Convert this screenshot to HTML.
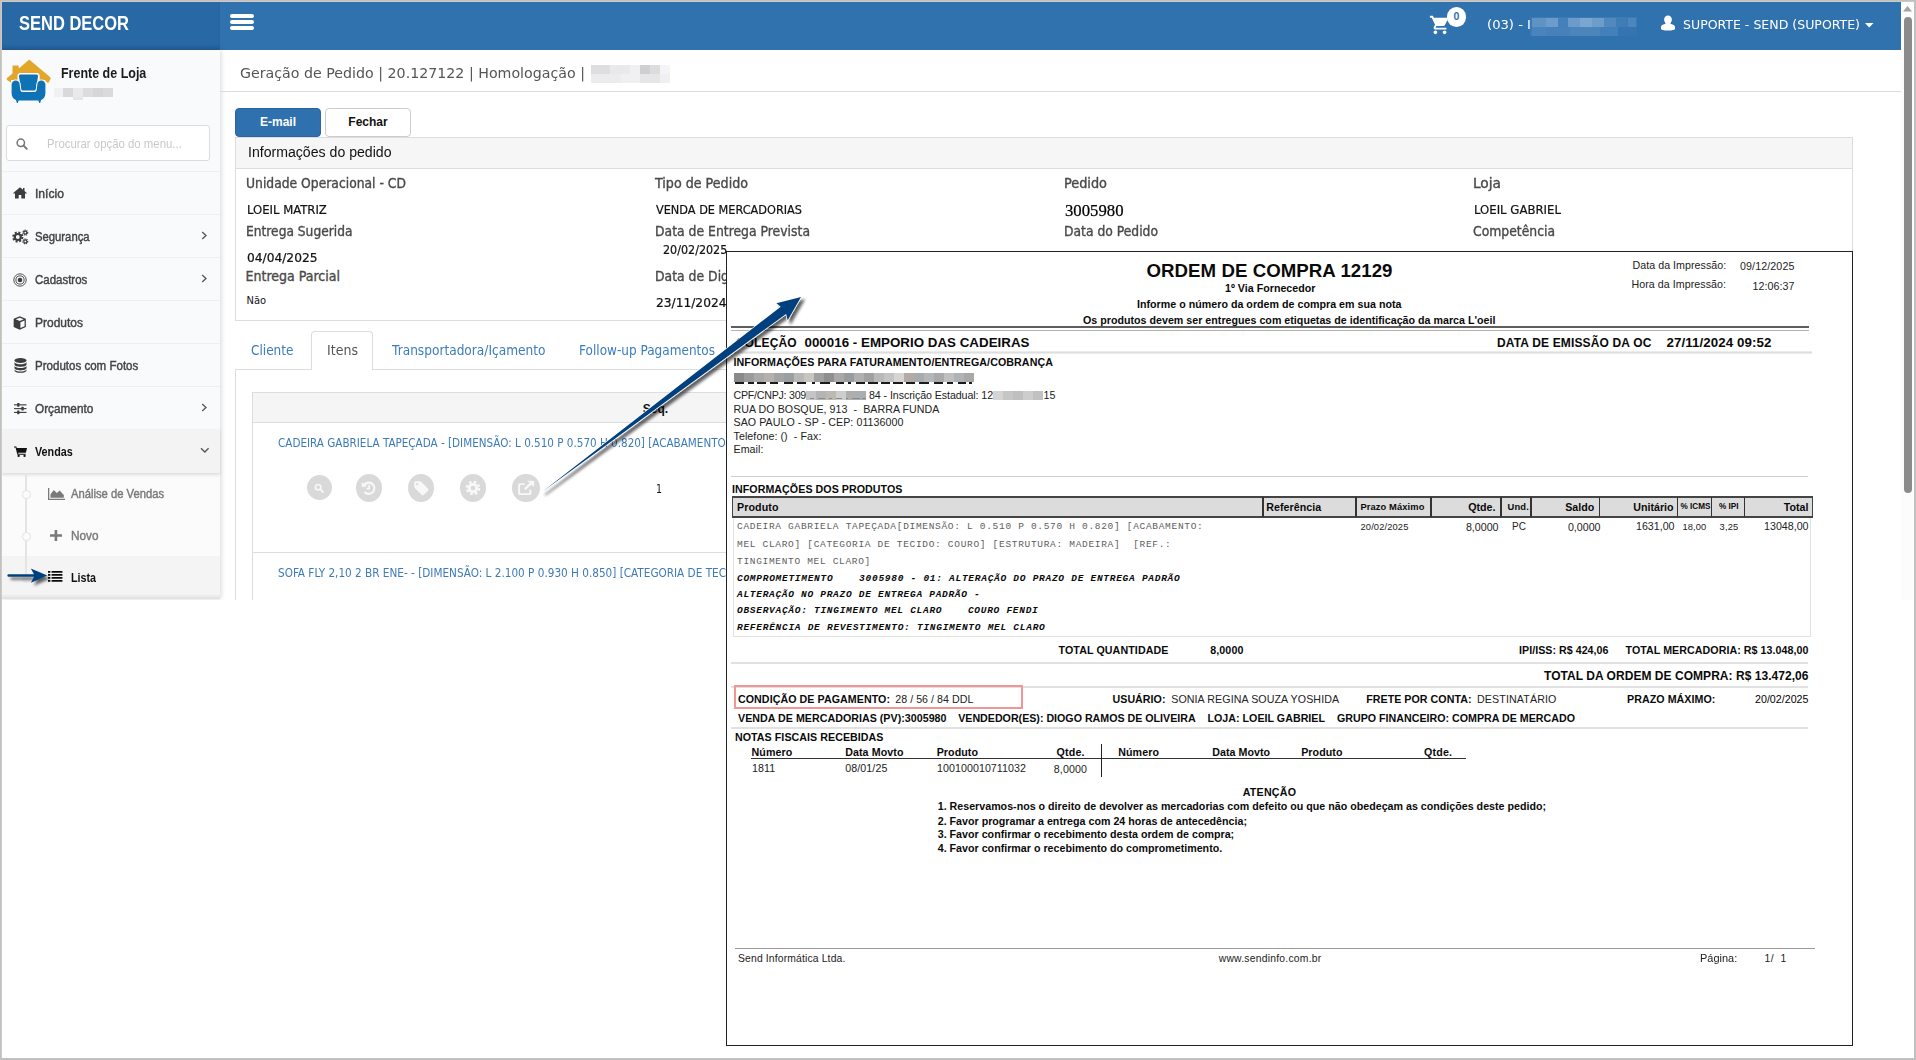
<!DOCTYPE html>
<html lang="pt-BR"><head><meta charset="utf-8"><title>Geração de Pedido</title>
<style>
html,body{margin:0;padding:0;}
body{width:1916px;height:1060px;background:#fff;position:relative;overflow:hidden;font-family:"Liberation Sans",Arial,sans-serif;}
.b{position:absolute;box-sizing:border-box;}
.t{position:absolute;white-space:pre;line-height:1;}
svg{position:absolute;overflow:visible;}
</style></head>
<body>
<div class="b" style="left:0px;top:0px;width:1916px;height:1060px;background:#fff;"></div>
<div class="b" style="left:2px;top:2px;width:218px;height:48px;background:#2868a5;box-shadow:inset 0 -4px 4px -2px rgba(0,0,0,.13);"></div>
<div class="b" style="left:220px;top:2px;width:1681px;height:48px;background:#3072ae;"></div>
<div class="t" style="top:14.00px;font:700 19.5px/1 'Liberation Sans', Arial, sans-serif;color:#fff;left:18.50px;transform-origin:0 0;transform:scaleX(0.8460);">SEND DECOR</div>
<div class="b" style="left:230px;top:14px;width:24px;height:4px;background:#fff;border-radius:2px;"></div>
<div class="b" style="left:230px;top:20px;width:24px;height:4px;background:#fff;border-radius:2px;"></div>
<div class="b" style="left:230px;top:26px;width:24px;height:4px;background:#fff;border-radius:2px;"></div>
<svg style="left:1429px;top:14px" width="22" height="22" viewBox="0 0 24 24"><path fill="#fff" d="M7 18c-1.1 0-2 .9-2 2s.9 2 2 2 2-.9 2-2-.9-2-2-2zM1 2v2h2l3.6 7.6-1.35 2.45C5.09 14.32 5 14.65 5 15c0 1.1.9 2 2 2h12v-2H7.42a.25.25 0 0 1-.25-.25l.03-.12L8.1 13h7.45c.75 0 1.41-.41 1.75-1.03l3.58-6.49A1 1 0 0 0 20 4H5.21l-.94-2H1zm16 16c-1.1 0-2 .9-2 2s.9 2 2 2 2-.9 2-2-.9-2-2-2z"/></svg>
<div class="b" style="left:1446.7px;top:7.2px;width:19.5px;height:19.5px;background:#fff;border-radius:50%;"></div>
<div class="t" style="top:11.00px;font:700 10.5px/1 'Liberation Sans', Arial, sans-serif;color:#2f6fab;left:856.50px;width:1200px;text-align:center;transform-origin:50% 0;"><span>0</span></div>
<div class="t" style="top:18.00px;font:400 13px/1 'DejaVu Sans Condensed', 'DejaVu Sans', sans-serif;color:#fff;left:1486.50px;transform-origin:0 0;transform:scaleX(1.1250);">(03) - I</div>
<div class="b" style="left:1530px;top:17px;width:107px;height:19px;background:#3b7ab5;"></div>
<div class="b" style="left:1532px;top:18px;width:14px;height:9px;background:#5f93c4;"></div>
<div class="b" style="left:1546px;top:18px;width:12px;height:9px;background:#6b9ccb;"></div>
<div class="b" style="left:1558px;top:18px;width:10px;height:9px;background:#4580ba;"></div>
<div class="b" style="left:1568px;top:18px;width:12px;height:9px;background:#6a9bca;"></div>
<div class="b" style="left:1580px;top:18px;width:12px;height:9px;background:#7aa6d0;"></div>
<div class="b" style="left:1592px;top:18px;width:12px;height:9px;background:#6c9dcb;"></div>
<div class="b" style="left:1604px;top:18px;width:12px;height:9px;background:#5189bf;"></div>
<div class="b" style="left:1616px;top:18px;width:10px;height:9px;background:#3f7db7;"></div>
<div class="b" style="left:1628px;top:18px;width:8px;height:9px;background:#4d86bd;"></div>
<div class="b" style="left:1532px;top:27px;width:14px;height:9px;background:#4a84bc;"></div>
<div class="b" style="left:1546px;top:27px;width:24px;height:9px;background:#4781ba;"></div>
<div class="b" style="left:1570px;top:27px;width:30px;height:9px;background:#4c85bc;"></div>
<div class="b" style="left:1600px;top:27px;width:18px;height:9px;background:#437fb8;"></div>
<div class="b" style="left:1618px;top:27px;width:19px;height:9px;background:#3475b1;"></div>
<svg style="left:1660px;top:15px" width="16" height="16" viewBox="0 0 16 16"><path fill="#fff" d="M8 .5c2.3 0 3.9 1.7 3.9 4.1 0 1.5-.6 2.9-1.600 3.700.3.5 1.100.9 2.300 1.300C14.500 10.300 15 11.200 15 12.400V14c0 .8-3 1.500-7 1.500S1 14.800 1 14v-1.600c0-1.200.5-2.100 2.400-2.800 1.200-.4 2-.8 2.300-1.300C4.700 7.500 4.100 6.100 4.100 4.600 4.100 2.200 5.700.5 8 .5z"/></svg>
<div class="t" style="top:18.00px;font:400 13px/1 'DejaVu Sans Condensed', 'DejaVu Sans', sans-serif;color:#fff;left:1682.50px;transform-origin:0 0;transform:scaleX(1.0728);">SUPORTE - SEND (SUPORTE)</div>
<svg style="left:1865px;top:22.5px" width="9" height="5" viewBox="0 0 9 5"><path fill="#fff" d="M0 0h8.500L4.250 4.500z"/></svg>
<div class="b" style="left:1901px;top:2px;width:12px;height:598px;background:#fcfcfc;"></div>
<svg style="left:1903px;top:6px" width="9" height="6" viewBox="0 0 9 6"><path fill="#a3a3a3" d="M4.500 0L9 5.500H0z"/></svg>
<div class="b" style="left:1904px;top:17px;width:8px;height:476px;background:#8b8b8b;border-radius:4px;"></div>
<div class="b" style="left:2px;top:50px;width:218px;height:549px;background:#f9fafc;box-shadow:1px 0 5px rgba(0,0,0,.16);"></div>
<svg style="left:6px;top:59px" width="46" height="46" viewBox="6 59 46 46">
<path fill="#e2a72a" d="M28.400 60.300c.5-.4 1.100-.4 1.600 0L50 77c.7.600.8 1.600.4 2.300l-1.600 2.900c-.3.600-1 .7-1.500.3L28.700 68.500 12 82.600c-.5.400-1.200.3-1.500-.3L7 80c-.5-.8-.3-1.700.4-2.300l5.100-4.300v-6.700c0-.7.5-1.200 1.200-1.200h3.900c.7 0 1.200.5 1.200 1.200v1.700z"/>
<path fill="#e2a72a" d="M28.700 66L47 81.500H10.500z"/>
<path fill="#f9fafc" d="M17.500 76c0-1.700 1.300-3 3-3h16.200c1.700 0 3 1.300 3 3v4h5.800v26H11V80h6.500z"/>
<path fill="#0f72b5" stroke="#f9fafc" stroke-width="2.200" paint-order="stroke" d="M20.500 74.600h16c1 0 1.700.8 1.500 1.800l-2 12.600c-.1.900-.9 1.500-1.700 1.500H22.700c-.9 0-1.600-.6-1.700-1.500l-2-12.600c-.2-1 .5-1.800 1.500-1.800z"/>
<path fill="#0f72b5" stroke="#f9fafc" stroke-width="2" paint-order="stroke" d="M15.700 80.400c2.200 0 3.700 1.400 3.900 3.600l.7 5.800c.2 1.500 1.200 2.300 2.600 2.300h11.200c1.400 0 2.400-.8 2.600-2.300l.7-5.800c.2-2.200 1.700-3.600 3.900-3.600 2.300 0 4.100 1.800 4.100 4.100v8.700c0 3.300-1.700 5.800-4.300 6.800l-.9 2.700c-.2.500-.9.500-1.100 0l-.7-2.100H18.600l-.7 2.100c-.2.500-.9.500-1.100 0l-.9-2.700c-2.600-1-4.300-3.500-4.300-6.800v-8.700c0-2.300 1.800-4.100 4.100-4.100z"/>
</svg>
<div class="t" style="top:66.00px;font:700 14.5px/1 'Liberation Sans', Arial, sans-serif;color:#1c1c1c;left:60.90px;transform-origin:0 0;transform:scaleX(0.8607);">Frente de Loja</div>
<div class="b" style="left:54px;top:88px;width:9px;height:9px;background:#f1f1f3;"></div>
<div class="b" style="left:63px;top:88px;width:10px;height:9px;background:#d9d9db;"></div>
<div class="b" style="left:73px;top:88px;width:10px;height:9px;background:#e9e9eb;"></div>
<div class="b" style="left:83px;top:88px;width:10px;height:9px;background:#dcdcde;"></div>
<div class="b" style="left:93px;top:88px;width:10px;height:9px;background:#d6d6d8;"></div>
<div class="b" style="left:103px;top:88px;width:10px;height:9px;background:#dadadc;"></div>
<div class="b" style="left:73px;top:97px;width:10px;height:2.5px;background:#e6e6e8;"></div>
<div class="b" style="left:6px;top:125px;width:204px;height:36px;background:#fff;border:1px solid #dcdcdc;border-radius:3px;"></div>
<svg style="left:15.5px;top:138px" width="12" height="12" viewBox="0 0 12 12"><circle cx="4.800" cy="4.800" r="3.700" fill="none" stroke="#767676" stroke-width="1.500"/><path d="M7.600 7.600L10.800 10.800" stroke="#767676" stroke-width="1.900" stroke-linecap="round"/></svg>
<div class="t" style="top:137.00px;font:400 13.5px/1 'Liberation Sans', Arial, sans-serif;color:#c9c9c9;left:46.70px;transform-origin:0 0;transform:scaleX(0.8433);">Procurar opção do menu...</div>
<div class="b" style="left:2px;top:171px;width:218px;height:1px;background:#efeff1;"></div>
<div class="b" style="left:2px;top:214px;width:218px;height:1px;background:#efeff1;"></div>
<div class="b" style="left:2px;top:257px;width:218px;height:1px;background:#efeff1;"></div>
<div class="b" style="left:2px;top:300px;width:218px;height:1px;background:#efeff1;"></div>
<div class="b" style="left:2px;top:343px;width:218px;height:1px;background:#efeff1;"></div>
<div class="b" style="left:2px;top:386px;width:218px;height:1px;background:#efeff1;"></div>
<div class="b" style="left:2px;top:472.5px;width:218px;height:84px;background:#fbfbfb;"></div>
<div class="b" style="left:2px;top:556px;width:218px;height:41px;background:#f4f4f4;"></div>
<div class="b" style="left:2px;top:429px;width:218px;height:43.5px;background:#f3f3f3;box-shadow:0 2px 3px rgba(0,0,0,.12);"></div>
<div class="t" style="top:187.00px;font:400 13.2px/1 'Liberation Sans', Arial, sans-serif;color:#444;left:34.70px;transform-origin:0 0;transform:scaleX(0.9197);-webkit-text-stroke:.45px #444;">Início</div>
<div class="t" style="top:230.00px;font:400 13.2px/1 'Liberation Sans', Arial, sans-serif;color:#444;left:34.70px;transform-origin:0 0;transform:scaleX(0.8558);-webkit-text-stroke:.45px #444;">Segurança</div>
<svg style="left:200.500px;top:231.0px" width="7" height="9" viewBox="0 0 7 9"><path d="M1.200 1l3.800 3.500L1.200 8" fill="none" stroke="#555" stroke-width="1.300"/></svg>
<div class="t" style="top:273.00px;font:400 13.2px/1 'Liberation Sans', Arial, sans-serif;color:#444;left:34.70px;transform-origin:0 0;transform:scaleX(0.8701);-webkit-text-stroke:.45px #444;">Cadastros</div>
<svg style="left:200.500px;top:274.0px" width="7" height="9" viewBox="0 0 7 9"><path d="M1.200 1l3.800 3.500L1.200 8" fill="none" stroke="#555" stroke-width="1.300"/></svg>
<div class="t" style="top:316.00px;font:400 13.2px/1 'Liberation Sans', Arial, sans-serif;color:#444;left:34.70px;transform-origin:0 0;transform:scaleX(0.9091);-webkit-text-stroke:.45px #444;">Produtos</div>
<div class="t" style="top:359.00px;font:400 13.2px/1 'Liberation Sans', Arial, sans-serif;color:#444;left:34.70px;transform-origin:0 0;transform:scaleX(0.8753);-webkit-text-stroke:.45px #444;">Produtos com Fotos</div>
<div class="t" style="top:402.00px;font:400 13.2px/1 'Liberation Sans', Arial, sans-serif;color:#444;left:34.70px;transform-origin:0 0;transform:scaleX(0.8937);-webkit-text-stroke:.45px #444;">Orçamento</div>
<svg style="left:200.500px;top:403.0px" width="7" height="9" viewBox="0 0 7 9"><path d="M1.200 1l3.800 3.500L1.200 8" fill="none" stroke="#555" stroke-width="1.300"/></svg>
<div class="t" style="top:445.00px;font:700 13.2px/1 'Liberation Sans', Arial, sans-serif;color:#111;left:34.70px;transform-origin:0 0;transform:scaleX(0.8184);">Vendas</div>
<svg style="left:199.500px;top:447.0px" width="10" height="7" viewBox="0 0 10 7"><path d="M1 1.200l3.800 3.800L8.600 1.200" fill="none" stroke="#555" stroke-width="1.300"/></svg>
<svg style="left:13px;top:187px" width="14" height="12" viewBox="0 0 14 12"><path fill="#3d3d3d" d="M7 .300L.200 6l.8.900L2 6.100V11.500h3.700V8h2.600v3.500H12V6.100l1 .8.800-.9-2.300-1.900V1h-1.500v1.800z"/></svg>
<svg style="left:11.500px;top:229px" width="17" height="16" viewBox="0 0 17 16"><g fill="none" stroke="#3d3d3d">
<circle cx="5.800" cy="8" r="3" stroke-width="2.200"/><circle cx="5.800" cy="8" r="4.600" stroke-width="2" stroke-dasharray="2 1.610"/>
<circle cx="13.300" cy="3.600" r="1.500" stroke-width="1.200"/><circle cx="13.300" cy="3.600" r="2.400" stroke-width="1.200" stroke-dasharray="1.100 .780"/>
<circle cx="13.300" cy="12.400" r="1.500" stroke-width="1.200"/><circle cx="13.300" cy="12.400" r="2.400" stroke-width="1.200" stroke-dasharray="1.100 .780"/></g></svg>
<svg style="left:13px;top:273px" width="14" height="14" viewBox="0 0 14 14"><g fill="none" stroke="#3d3d3d"><circle cx="7" cy="7" r="6.200" stroke-width=".9"/><circle cx="7" cy="7" r="4.100" stroke-width=".9"/></g><circle cx="7" cy="7" r="2.300" fill="#3d3d3d"/></svg>
<svg style="left:12.700px;top:315.500px" width="13.500" height="14" viewBox="0 0 14 15" preserveAspectRatio="none"><path fill="#3d3d3d" d="M7 .300l6.300 2.600v8.800L7 14.700.700 11.700V2.900z"/><path fill="#f9fafc" d="M7 1.900L2.900 3.600 7 5.400l4.100-1.800zM7.700 6.700v6.200l4.300-2V4.800z"/></svg>
<svg style="left:13.500px;top:358px" width="13" height="15" viewBox="0 0 13 15"><g fill="#3d3d3d"><ellipse cx="6.500" cy="2.600" rx="6" ry="2.500"/>
<path d="M.5 4.300c1 1.500 3.400 2 6 2s5-.5 6-2v2.200c0 1.300-2.700 2.300-6 2.300s-6-1-6-2.300z"/><path d="M.5 7.900c1 1.500 3.400 2 6 2s5-.5 6-2v2.200c0 1.300-2.700 2.300-6 2.300s-6-1-6-2.300z"/><path d="M.5 11.400c1 1.500 3.400 2 6 2s5-.5 6-2v1c0 1.300-2.700 2.400-6 2.400s-6-1.100-6-2.400z"/></g></svg>
<svg style="left:13.500px;top:403px" width="12.500" height="11.200" viewBox="0 0 14 13" preserveAspectRatio="none"><g fill="#3d3d3d"><rect x="0" y="1.500" width="14" height="1.300"/><rect x="0" y="5.900" width="14" height="1.300"/><rect x="0" y="10.300" width="14" height="1.300"/>
<rect x="3.500" y="0" width="2.600" height="4.300" rx=".5"/><rect x="8.300" y="4.400" width="2.600" height="4.300" rx=".5"/><rect x="3.500" y="8.800" width="2.600" height="4.200" rx=".5"/></g></svg>
<svg style="left:13.500px;top:445.800px" width="13.400" height="11.200" viewBox="0 0 15 13" preserveAspectRatio="none"><path fill="#111" d="M0 .500h2.600l.5 1.700H14.600l-1.300 5.500H4.600l.3 1.300h8.200v1.200H3.800L1.700 1.800H0z"/><circle cx="5.200" cy="11.600" r="1.300" fill="#111"/><circle cx="11.800" cy="11.600" r="1.300" fill="#111"/></svg>
<div class="b" style="left:2px;top:593.5px;width:218px;height:5.5px;background:linear-gradient(#f4f4f4,#dfdfdf);"></div>
<div class="b" style="left:25px;top:473px;width:2px;height:107px;background:#e4e4e4;"></div>
<div class="b" style="left:22px;top:490px;width:8.5px;height:8.5px;background:#fbfbfb;border:1px solid #e3e3e3;border-radius:50%;"></div>
<div class="b" style="left:22px;top:532px;width:8.5px;height:8.5px;background:#fbfbfb;border:1px solid #e3e3e3;border-radius:50%;"></div>
<div class="b" style="left:22px;top:574px;width:8.5px;height:8.5px;background:#e9e9e9;border-radius:50%;"></div>
<svg style="left:47.500px;top:488px" width="17" height="12" viewBox="0 0 17 12"><path fill="#7a7a7a" d="M0 0h1.300v10.700H17V12H0z"/><path fill="#7a7a7a" d="M2.500 9.700V6.200L5.800 2l3 3 2.900-2.400L15.800 7v2.700z"/></svg>
<div class="t" style="top:487.00px;font:400 13.2px/1 'Liberation Sans', Arial, sans-serif;color:#7a7a7a;left:70.50px;transform-origin:0 0;transform:scaleX(0.8513);-webkit-text-stroke:.45px #7a7a7a;">Análise de Vendas</div>
<svg style="left:50px;top:529.500px" width="12" height="11" viewBox="0 0 12 11"><path fill="#7a7a7a" d="M4.600 0h2.600v4.200H12v2.500H7.200V11H4.600V6.700H0V4.200h4.600z"/></svg>
<div class="t" style="top:529.00px;font:400 13.2px/1 'Liberation Sans', Arial, sans-serif;color:#7a7a7a;left:71.00px;transform-origin:0 0;transform:scaleX(0.8929);-webkit-text-stroke:.45px #7a7a7a;">Novo</div>
<svg style="left:48.200px;top:571px" width="14.700" height="11" viewBox="0 0 15 11" preserveAspectRatio="none"><g fill="#0a0a0a"><rect x="0" y="0" width="2.400" height="1.800"/><rect x="0" y="3" width="2.400" height="1.800"/><rect x="0" y="6" width="2.400" height="1.800"/><rect x="0" y="9" width="2.400" height="1.800"/><rect x="3.600" y="0" width="11.200" height="1.800" rx=".5"/><rect x="3.600" y="3" width="11.200" height="1.800" rx=".5"/><rect x="3.600" y="6" width="11.200" height="1.800" rx=".5"/><rect x="3.600" y="9" width="11.200" height="1.800" rx=".5"/></g></svg>
<div class="t" style="top:571.00px;font:700 13.2px/1 'Liberation Sans', Arial, sans-serif;color:#111;left:71.00px;transform-origin:0 0;transform:scaleX(0.8122);">Lista</div>
<div class="t" style="top:66.00px;font:400 14px/1 'DejaVu Sans', Verdana, sans-serif;color:#555;left:239.50px;transform-origin:0 0;transform:scaleX(1.0147);">Geração de Pedido | 20.127122 | Homologação |</div>
<div class="b" style="left:591px;top:65px;width:79px;height:17.5px;background:#f0f0f3;"></div>
<div class="b" style="left:591px;top:65px;width:19px;height:9px;background:#dedee0;"></div>
<div class="b" style="left:610px;top:65px;width:20px;height:9px;background:#e9e9ec;"></div>
<div class="b" style="left:640px;top:65px;width:10px;height:9px;background:#cfcfd1;"></div>
<div class="b" style="left:650px;top:65px;width:10px;height:9px;background:#dcdcdc;"></div>
<div class="b" style="left:660px;top:65px;width:10px;height:9px;background:#f3f3f8;"></div>
<div class="b" style="left:591px;top:74px;width:30px;height:8.5px;background:#ececef;"></div>
<div class="b" style="left:621px;top:74px;width:19px;height:8.5px;background:#f0f0f2;"></div>
<div class="b" style="left:640px;top:74px;width:20px;height:8.5px;background:#e6e6e9;"></div>
<div class="b" style="left:220px;top:91px;width:1681px;height:1px;background:#dcdcdc;"></div>
<div class="b" style="left:235px;top:108px;width:86px;height:29px;background:#2f70ae;border:1px solid #2a65a0;border-radius:4px;"></div>
<div class="t" style="top:116.00px;font:700 12px/1 'Liberation Sans', Arial, sans-serif;color:#fff;left:-322.00px;width:1200px;text-align:center;transform-origin:50% 0;"><span>E-mail</span></div>
<div class="b" style="left:325px;top:108px;width:86px;height:28.5px;background:#fff;border:1px solid #ccc;border-radius:4px;"></div>
<div class="t" style="top:116.00px;font:700 12px/1 'Liberation Sans', Arial, sans-serif;color:#111;left:-232.00px;width:1200px;text-align:center;transform-origin:50% 0;"><span>Fechar</span></div>
<div class="b" style="left:235px;top:137px;width:1618px;height:184px;background:#fff;border:1px solid #ddd;"></div>
<div class="b" style="left:236px;top:138px;width:1616px;height:30.5px;background:#f6f6f6;border-bottom:1px solid #ddd;"></div>
<div class="t" style="top:145.00px;font:400 14px/1 'Liberation Sans', Arial, sans-serif;color:#111;left:247.50px;transform-origin:0 0;transform:scaleX(1.0075);">Informações do pedido</div>
<div class="t" style="top:176.00px;font:400 14px/1 'DejaVu Sans Condensed', 'DejaVu Sans', sans-serif;color:#4a4a4a;left:245.50px;transform-origin:0 0;transform:scaleX(0.9809);-webkit-text-stroke:.35px #4a4a4a;">Unidade Operacional - CD</div>
<div class="t" style="top:204.00px;font:400 12.5px/1 'DejaVu Sans Condensed', 'DejaVu Sans', sans-serif;color:#111;left:246.50px;transform-origin:0 0;transform:scaleX(1.0357);-webkit-text-stroke:.2px #111;">LOEIL MATRIZ</div>
<div class="t" style="top:224.00px;font:400 14px/1 'DejaVu Sans Condensed', 'DejaVu Sans', sans-serif;color:#4a4a4a;left:245.50px;transform-origin:0 0;transform:scaleX(0.9740);-webkit-text-stroke:.35px #4a4a4a;">Entrega Sugerida</div>
<div class="t" style="top:252.00px;font:400 12.5px/1 'DejaVu Sans Condensed', 'DejaVu Sans', sans-serif;color:#111;left:246.50px;transform-origin:0 0;transform:scaleX(1.0878);-webkit-text-stroke:.2px #111;">04/04/2025</div>
<div class="t" style="top:269.00px;font:400 14px/1 'DejaVu Sans Condensed', 'DejaVu Sans', sans-serif;color:#4a4a4a;left:245.50px;transform-origin:0 0;-webkit-text-stroke:.35px #4a4a4a;">Entrega Parcial</div>
<div class="t" style="top:295.00px;font:400 11px/1 'DejaVu Sans Condensed', 'DejaVu Sans', sans-serif;color:#111;left:246.50px;transform-origin:0 0;">Não</div>
<div class="t" style="top:176.00px;font:400 14px/1 'DejaVu Sans Condensed', 'DejaVu Sans', sans-serif;color:#4a4a4a;left:654.50px;transform-origin:0 0;transform:scaleX(1.0080);-webkit-text-stroke:.35px #4a4a4a;">Tipo de Pedido</div>
<div class="t" style="top:204.00px;font:400 12.5px/1 'DejaVu Sans Condensed', 'DejaVu Sans', sans-serif;color:#111;left:655.50px;transform-origin:0 0;transform:scaleX(1.0051);-webkit-text-stroke:.2px #111;">VENDA DE MERCADORIAS</div>
<div class="t" style="top:224.00px;font:400 14px/1 'DejaVu Sans Condensed', 'DejaVu Sans', sans-serif;color:#4a4a4a;left:654.50px;transform-origin:0 0;transform:scaleX(0.9862);-webkit-text-stroke:.35px #4a4a4a;">Data de Entrega Prevista</div>
<div class="t" style="top:244.00px;font:400 12.5px/1 'DejaVu Sans Condensed', 'DejaVu Sans', sans-serif;color:#111;left:662.50px;transform-origin:0 0;transform:scaleX(0.9921);-webkit-text-stroke:.2px #111;">20/02/2025</div>
<div class="t" style="top:269.00px;font:400 14px/1 'DejaVu Sans Condensed', 'DejaVu Sans', sans-serif;color:#4a4a4a;left:654.50px;transform-origin:0 0;transform:scaleX(0.9865);-webkit-text-stroke:.35px #4a4a4a;">Data de Digitação</div>
<div class="t" style="top:297.00px;font:400 12.5px/1 'DejaVu Sans Condensed', 'DejaVu Sans', sans-serif;color:#111;left:655.50px;transform-origin:0 0;transform:scaleX(1.0878);-webkit-text-stroke:.2px #111;">23/11/2024</div>
<div class="t" style="top:176.00px;font:400 14px/1 'DejaVu Sans Condensed', 'DejaVu Sans', sans-serif;color:#4a4a4a;left:1063.50px;transform-origin:0 0;transform:scaleX(1.0223);-webkit-text-stroke:.35px #4a4a4a;">Pedido</div>
<div class="t" style="top:203.00px;font:400 16px/1 'Liberation Serif', 'Times New Roman', serif;color:#000;left:1065.00px;transform-origin:0 0;transform:scaleX(1.0446);-webkit-text-stroke:.25px #000;">3005980</div>
<div class="t" style="top:224.00px;font:400 14px/1 'DejaVu Sans Condensed', 'DejaVu Sans', sans-serif;color:#4a4a4a;left:1063.50px;transform-origin:0 0;transform:scaleX(0.9809);-webkit-text-stroke:.35px #4a4a4a;">Data do Pedido</div>
<div class="t" style="top:176.00px;font:400 14px/1 'DejaVu Sans Condensed', 'DejaVu Sans', sans-serif;color:#4a4a4a;left:1472.50px;transform-origin:0 0;transform:scaleX(1.0894);-webkit-text-stroke:.35px #4a4a4a;">Loja</div>
<div class="t" style="top:204.00px;font:400 12.5px/1 'DejaVu Sans Condensed', 'DejaVu Sans', sans-serif;color:#111;left:1473.50px;transform-origin:0 0;transform:scaleX(1.0413);-webkit-text-stroke:.2px #111;">LOEIL GABRIEL</div>
<div class="t" style="top:224.00px;font:400 14px/1 'DejaVu Sans Condensed', 'DejaVu Sans', sans-serif;color:#4a4a4a;left:1472.50px;transform-origin:0 0;transform:scaleX(0.9839);-webkit-text-stroke:.35px #4a4a4a;">Competência</div>
<div class="b" style="left:235px;top:369px;width:1618px;height:1px;background:#ddd;"></div>
<div class="b" style="left:311px;top:331px;width:62px;height:39px;background:#fff;border:1px solid #ddd;border-radius:4px 4px 0 0;border-bottom:none;"></div>
<div class="t" style="top:343.00px;font:400 14px/1 'DejaVu Sans', Verdana, sans-serif;color:#3b7dbd;left:250.50px;transform-origin:0 0;transform:scaleX(0.8646);">Cliente</div>
<div class="t" style="top:343.00px;font:400 14px/1 'DejaVu Sans', Verdana, sans-serif;color:#555;left:326.50px;transform-origin:0 0;transform:scaleX(0.9010);">Itens</div>
<div class="t" style="top:343.00px;font:400 14px/1 'DejaVu Sans', Verdana, sans-serif;color:#3b7dbd;left:391.50px;transform-origin:0 0;transform:scaleX(0.8703);">Transportadora/Içamento</div>
<div class="t" style="top:343.00px;font:400 14px/1 'DejaVu Sans', Verdana, sans-serif;color:#3b7dbd;left:578.50px;transform-origin:0 0;transform:scaleX(0.8634);">Follow-up Pagamentos</div>
<div class="b" style="left:235px;top:369px;width:1px;height:230.5px;background:#ddd;"></div>
<div class="b" style="left:252px;top:392px;width:1600px;height:207.5px;background:#fff;border:1px solid #ddd;border-bottom:none;"></div>
<div class="b" style="left:253px;top:393px;width:1598px;height:29.5px;background:#f5f5f5;border-bottom:1px solid #ddd;"></div>
<div class="t" style="top:403.00px;font:700 12px/1 'Liberation Sans', Arial, sans-serif;color:#111;left:55.50px;width:1200px;text-align:center;transform-origin:50% 0;"><span>Seq.</span></div>
<div class="b" style="left:253px;top:552px;width:1598px;height:1px;background:#ddd;"></div>
<div class="t" style="top:437.00px;font:400 12px/1 'DejaVu Sans Condensed', 'DejaVu Sans', sans-serif;color:#3d7ab8;left:277.50px;transform-origin:0 0;transform:scaleX(0.9642);">CADEIRA GABRIELA TAPEÇADA - [DIMENSÃO: L 0.510 P 0.570 H 0.820] [ACABAMENTO: MEL CLARO]</div>
<div class="t" style="top:567.00px;font:400 12px/1 'DejaVu Sans Condensed', 'DejaVu Sans', sans-serif;color:#3d7ab8;left:277.50px;transform-origin:0 0;transform:scaleX(0.9707);">SOFA FLY 2,10 2 BR ENE- - [DIMENSÃO: L 2.100 P 0.930 H 0.850] [CATEGORIA DE TECIDO: LINHO]</div>
<div class="t" style="top:483.00px;font:400 12px/1 'DejaVu Sans Condensed', 'DejaVu Sans', sans-serif;color:#111;left:656.00px;transform-origin:0 0;transform:scaleX(0.8727);">1</div>
<div class="b" style="left:307px;top:475px;width:25px;height:25px;background:#d9d9d9;border-radius:50%;"></div>
<div class="b" style="left:356px;top:474px;width:26px;height:28px;background:#d9d9d9;border-radius:50%;"></div>
<div class="b" style="left:408px;top:474px;width:26px;height:28px;background:#d9d9d9;border-radius:50%;"></div>
<div class="b" style="left:460px;top:474px;width:26px;height:28px;background:#d9d9d9;border-radius:50%;"></div>
<div class="b" style="left:512px;top:474px;width:27.5px;height:28px;background:#d9d9d9;border-radius:50%;"></div>
<svg style="left:312.300px;top:480.500px" width="14.500" height="14.500" viewBox="0 0 16 16"><circle cx="6.800" cy="6.800" r="3" fill="none" stroke="#f8f8f8" stroke-width="1.800"/><path d="M9.200 9.200l3 3" stroke="#f8f8f8" stroke-width="2" stroke-linecap="round"/></svg>
<svg style="left:360px;top:479px" width="18" height="18" viewBox="0 0 16 16"><path d="M3.200 6.200A5 5 0 1 1 4 11.500" fill="none" stroke="#f8f8f8" stroke-width="1.900"/><path d="M1.300 2.800l.6 4.600 4.500-1.200z" fill="#f8f8f8"/><path d="M8.200 5.300v3.200h-2.400" fill="none" stroke="#f8f8f8" stroke-width="1.500"/></svg>
<svg style="left:412px;top:479px" width="18" height="18" viewBox="0 0 16 16"><path fill="#f8f8f8" d="M2 3.200c0-.7.500-1.200 1.200-1.200h3.600c.5 0 1 .2 1.300.5l6 6c.6.600.6 1.500 0 2.100l-3.500 3.500c-.6.600-1.500.6-2.100 0l-6-6c-.3-.3-.5-.8-.5-1.300z"/><circle cx="4.600" cy="4.600" r="1" fill="#d9d9d9"/></svg>
<svg style="left:464px;top:479px" width="18" height="18" viewBox="0 0 16 16"><circle cx="8" cy="8" r="3.300" fill="none" stroke="#f8f8f8" stroke-width="2.600"/><circle cx="8" cy="8" r="5.400" fill="none" stroke="#f8f8f8" stroke-width="2.200" stroke-dasharray="2.300 1.940"/></svg>
<svg style="left:516px;top:478.500px" width="20" height="18" preserveAspectRatio="none" viewBox="0 0 16 16"><path d="M11.500 9.500v3.300c0 .4-.3.700-.7.700H3.200c-.4 0-.7-.3-.7-.7V5.200c0-.4.300-.7.700-.7H7" fill="none" stroke="#f8f8f8" stroke-width="1.600"/><path d="M7 9l6-6" stroke="#f8f8f8" stroke-width="1.900"/><path fill="#f8f8f8" d="M9 1.500h5.500V7z"/></svg>
<div class="b" style="left:2px;top:599.5px;width:1912px;height:459px;background:#fff;"></div>
<div class="b" style="left:726px;top:251px;width:1127px;height:795px;background:#fff;border:1px solid #222;"></div>
<div class="t" style="top:262.00px;font:700 18.67px/1 'Liberation Sans', Arial, sans-serif;color:#0a0a0a;left:1146.50px;transform-origin:0 0;letter-spacing:0.047px;">ORDEM DE COMPRA 12129</div>
<div class="t" style="top:283.00px;font:700 10.67px/1 'Liberation Sans', Arial, sans-serif;color:#0a0a0a;left:1225.00px;transform-origin:0 0;letter-spacing:0.019px;">1º Via Fornecedor</div>
<div class="t" style="top:299.00px;font:700 10.67px/1 'Liberation Sans', Arial, sans-serif;color:#0a0a0a;left:1137.00px;transform-origin:0 0;letter-spacing:0.021px;">Informe o número da ordem de compra em sua nota</div>
<div class="t" style="top:315.00px;font:700 10.67px/1 'Liberation Sans', Arial, sans-serif;color:#0a0a0a;left:1083.00px;transform-origin:0 0;letter-spacing:0.017px;">Os produtos devem ser entregues com etiquetas de identificação da marca L'oeil</div>
<div class="t" style="top:260.00px;font:400 10.67px/1 'Liberation Sans', Arial, sans-serif;color:#222;left:1632.50px;transform-origin:0 0;letter-spacing:0.039px;">Data da Impressão:</div>
<div class="t" style="top:261.00px;font:400 10.67px/1 'Liberation Sans', Arial, sans-serif;color:#222;left:1740.00px;transform-origin:0 0;letter-spacing:0.116px;">09/12/2025</div>
<div class="t" style="top:279.00px;font:400 10.67px/1 'Liberation Sans', Arial, sans-serif;color:#222;left:1631.50px;transform-origin:0 0;letter-spacing:0.050px;">Hora da Impressão:</div>
<div class="t" style="top:281.00px;font:400 10.67px/1 'Liberation Sans', Arial, sans-serif;color:#222;left:1752.50px;transform-origin:0 0;letter-spacing:0.064px;">12:06:37</div>
<div class="b" style="left:730.5px;top:326.2px;width:1078px;height:1.7px;background:#5e5e5e;"></div>
<div class="b" style="left:730.5px;top:330px;width:1078px;height:1.3px;background:#b4b4b4;"></div>
<div class="t" style="top:337.00px;font:700 12px/1 'Liberation Sans', Arial, sans-serif;color:#0a0a0a;left:735.80px;transform-origin:0 0;letter-spacing:0.129px;">COLEÇÃO</div>
<div class="t" style="top:336.00px;font:700 13.33px/1 'Liberation Sans', Arial, sans-serif;color:#0a0a0a;left:804.50px;transform-origin:0 0;letter-spacing:0.020px;">000016 - EMPORIO DAS CADEIRAS</div>
<div class="t" style="top:337.00px;font:700 12px/1 'Liberation Sans', Arial, sans-serif;color:#0a0a0a;left:1497.00px;transform-origin:0 0;letter-spacing:0.150px;">DATA DE EMISSÃO DA OC</div>
<div class="t" style="top:336.00px;font:700 13.33px/1 'Liberation Sans', Arial, sans-serif;color:#0a0a0a;left:1666.50px;transform-origin:0 0;letter-spacing:0.077px;">27/11/2024 09:52</div>
<div class="b" style="left:730.5px;top:351px;width:1081.5px;height:3px;background:linear-gradient(#f2f2f2,#dedede 50%,#f2f2f2);"></div>
<div class="t" style="top:357.00px;font:700 10.67px/1 'Liberation Sans', Arial, sans-serif;color:#0a0a0a;left:733.50px;transform-origin:0 0;letter-spacing:0.083px;">INFORMAÇÕES PARA FATURAMENTO/ENTREGA/COBRANÇA</div>
<div class="b" style="left:734px;top:373px;width:10px;height:9px;background:#8a8a8a;"></div>
<div class="b" style="left:744px;top:373px;width:10px;height:9px;background:#9b9b9b;"></div>
<div class="b" style="left:754px;top:373px;width:10px;height:9px;background:#a9a9a9;"></div>
<div class="b" style="left:764px;top:373px;width:10px;height:9px;background:#b5b0ab;"></div>
<div class="b" style="left:774px;top:373px;width:10px;height:9px;background:#a3a3a3;"></div>
<div class="b" style="left:784px;top:373px;width:10px;height:9px;background:#9a9fa2;"></div>
<div class="b" style="left:794px;top:373px;width:10px;height:9px;background:#b8b8b8;"></div>
<div class="b" style="left:804px;top:373px;width:10px;height:9px;background:#c9c5c0;"></div>
<div class="b" style="left:814px;top:373px;width:10px;height:9px;background:#a0a0a0;"></div>
<div class="b" style="left:824px;top:373px;width:10px;height:9px;background:#8f8f8f;"></div>
<div class="b" style="left:834px;top:373px;width:10px;height:9px;background:#a8a8a8;"></div>
<div class="b" style="left:844px;top:373px;width:10px;height:9px;background:#999c9f;"></div>
<div class="b" style="left:854px;top:373px;width:10px;height:9px;background:#b0b0b0;"></div>
<div class="b" style="left:864px;top:373px;width:10px;height:9px;background:#a1a1a1;"></div>
<div class="b" style="left:874px;top:373px;width:10px;height:9px;background:#b9b9b9;"></div>
<div class="b" style="left:884px;top:373px;width:10px;height:9px;background:#c4c4c4;"></div>
<div class="b" style="left:894px;top:373px;width:10px;height:9px;background:#d5d5d2;"></div>
<div class="b" style="left:904px;top:373px;width:10px;height:9px;background:#b3aca6;"></div>
<div class="b" style="left:914px;top:373px;width:10px;height:9px;background:#a7abad;"></div>
<div class="b" style="left:924px;top:373px;width:10px;height:9px;background:#b4b7b9;"></div>
<div class="b" style="left:934px;top:373px;width:10px;height:9px;background:#aaaaaa;"></div>
<div class="b" style="left:944px;top:373px;width:10px;height:9px;background:#c0c0c0;"></div>
<div class="b" style="left:954px;top:373px;width:10px;height:9px;background:#b0b3b5;"></div>
<div class="b" style="left:964px;top:373px;width:10px;height:9px;background:#a8a8a8;"></div>
<div class="b" style="left:735px;top:382px;width:9px;height:2.2px;background:#1a1a1a;"></div>
<div class="b" style="left:748px;top:382px;width:6px;height:2.2px;background:#1a1a1a;"></div>
<div class="b" style="left:757px;top:382px;width:9px;height:2.2px;background:#1a1a1a;"></div>
<div class="b" style="left:770px;top:382px;width:8px;height:2.2px;background:#1a1a1a;"></div>
<div class="b" style="left:784px;top:382px;width:9px;height:2.2px;background:#1a1a1a;"></div>
<div class="b" style="left:797px;top:382px;width:9px;height:2.2px;background:#1a1a1a;"></div>
<div class="b" style="left:812px;top:382px;width:3px;height:2.2px;background:#1a1a1a;"></div>
<div class="b" style="left:820px;top:382px;width:10px;height:2.2px;background:#1a1a1a;"></div>
<div class="b" style="left:836px;top:382px;width:8px;height:2.2px;background:#1a1a1a;"></div>
<div class="b" style="left:848px;top:382px;width:3px;height:2.2px;background:#1a1a1a;"></div>
<div class="b" style="left:856px;top:382px;width:9px;height:2.2px;background:#1a1a1a;"></div>
<div class="b" style="left:868px;top:382px;width:10px;height:2.2px;background:#1a1a1a;"></div>
<div class="b" style="left:881px;top:382px;width:9px;height:2.2px;background:#1a1a1a;"></div>
<div class="b" style="left:893px;top:382px;width:10px;height:2.2px;background:#1a1a1a;"></div>
<div class="b" style="left:906px;top:382px;width:9px;height:2.2px;background:#1a1a1a;"></div>
<div class="b" style="left:919px;top:382px;width:10px;height:2.2px;background:#1a1a1a;"></div>
<div class="b" style="left:934px;top:382px;width:9px;height:2.2px;background:#1a1a1a;"></div>
<div class="b" style="left:947px;top:382px;width:6px;height:2.2px;background:#1a1a1a;"></div>
<div class="b" style="left:958px;top:382px;width:8px;height:2.2px;background:#1a1a1a;"></div>
<div class="b" style="left:969px;top:382px;width:3px;height:2.2px;background:#1a1a1a;"></div>
<div class="t" style="top:390.00px;font:400 10.67px/1 'Liberation Sans', Arial, sans-serif;color:#222;left:733.50px;transform-origin:0 0;letter-spacing:-0.255px;">CPF/CNPJ: 309</div>
<div class="b" style="left:806px;top:391px;width:10.3px;height:8.5px;background:#c4c4c4;"></div>
<div class="b" style="left:816px;top:391px;width:10.3px;height:8.5px;background:#b4b4b4;"></div>
<div class="b" style="left:826px;top:391px;width:10.3px;height:8.5px;background:#bcb8b2;"></div>
<div class="b" style="left:836px;top:391px;width:10.3px;height:8.5px;background:#cdcdcd;"></div>
<div class="b" style="left:846px;top:391px;width:10.3px;height:8.5px;background:#aeaeae;"></div>
<div class="b" style="left:856px;top:391px;width:10.3px;height:8.5px;background:#a9aeb2;"></div>
<div class="b" style="left:810px;top:397.5px;width:4px;height:1.8px;background:#8a8a8a;"></div>
<div class="b" style="left:818px;top:397.5px;width:7px;height:1.8px;background:#8a8a8a;"></div>
<div class="b" style="left:829px;top:397.5px;width:3px;height:1.8px;background:#8a8a8a;"></div>
<div class="b" style="left:836px;top:397.5px;width:6px;height:1.8px;background:#8a8a8a;"></div>
<div class="b" style="left:846px;top:397.5px;width:2px;height:1.8px;background:#8a8a8a;"></div>
<div class="b" style="left:852px;top:397.5px;width:8px;height:1.8px;background:#8a8a8a;"></div>
<div class="b" style="left:862px;top:397.5px;width:4px;height:1.8px;background:#8a8a8a;"></div>
<div class="t" style="top:390.00px;font:400 10.67px/1 'Liberation Sans', Arial, sans-serif;color:#222;left:869.00px;transform-origin:0 0;letter-spacing:-0.080px;">84 - Inscrição Estadual: 12</div>
<div class="b" style="left:992.5px;top:391px;width:10px;height:8.5px;background:#d4d4d4;"></div>
<div class="b" style="left:1002.5px;top:391px;width:10px;height:8.5px;background:#c6c6c6;"></div>
<div class="b" style="left:1012.5px;top:391px;width:10px;height:8.5px;background:#bfbfbf;"></div>
<div class="b" style="left:1022.5px;top:391px;width:10px;height:8.5px;background:#cdcdcd;"></div>
<div class="b" style="left:1032.5px;top:391px;width:10px;height:8.5px;background:#c1c1c1;"></div>
<div class="t" style="top:390.00px;font:400 10.67px/1 'Liberation Sans', Arial, sans-serif;color:#222;left:1043.50px;transform-origin:0 0;letter-spacing:0.070px;">15</div>
<div class="t" style="top:404.00px;font:400 10.67px/1 'Liberation Sans', Arial, sans-serif;color:#222;left:733.50px;transform-origin:0 0;letter-spacing:0.050px;">RUA DO BOSQUE, 913 &nbsp;- &nbsp;BARRA FUNDA</div>
<div class="t" style="top:417.00px;font:400 10.67px/1 'Liberation Sans', Arial, sans-serif;color:#222;left:733.50px;transform-origin:0 0;letter-spacing:0.059px;">SAO PAULO - SP - CEP: 01136000</div>
<div class="t" style="top:431.00px;font:400 10.67px/1 'Liberation Sans', Arial, sans-serif;color:#222;left:733.50px;transform-origin:0 0;letter-spacing:0.077px;">Telefone: () &nbsp;- Fax:</div>
<div class="t" style="top:444.00px;font:400 10.67px/1 'Liberation Sans', Arial, sans-serif;color:#222;left:733.50px;transform-origin:0 0;letter-spacing:0.065px;">Email:</div>
<div class="b" style="left:730.5px;top:476px;width:1077.5px;height:1px;background:#cfcfcf;"></div>
<div class="t" style="top:484.00px;font:700 10.67px/1 'Liberation Sans', Arial, sans-serif;color:#0a0a0a;left:732.00px;transform-origin:0 0;letter-spacing:0.057px;">INFORMAÇÕES DOS PRODUTOS</div>
<div class="b" style="left:732px;top:496px;width:1081px;height:21.7px;background:#dcdcdc;border:1.500px solid #444;border-top-width:2px;border-bottom-width:2px;"></div>
<div class="b" style="left:1262.25px;top:497px;width:1.5px;height:19.5px;background:#333;"></div>
<div class="b" style="left:1355.25px;top:497px;width:1.5px;height:19.5px;background:#333;"></div>
<div class="b" style="left:1430.25px;top:497px;width:1.5px;height:19.5px;background:#333;"></div>
<div class="b" style="left:1500.25px;top:497px;width:1.5px;height:19.5px;background:#333;"></div>
<div class="b" style="left:1530.25px;top:497px;width:1.5px;height:19.5px;background:#333;"></div>
<div class="b" style="left:1598.75px;top:497px;width:1.5px;height:19.5px;background:#333;"></div>
<div class="b" style="left:1676.75px;top:497px;width:1.5px;height:19.5px;background:#333;"></div>
<div class="b" style="left:1710.75px;top:497px;width:1.5px;height:19.5px;background:#333;"></div>
<div class="b" style="left:1743.75px;top:497px;width:1.5px;height:19.5px;background:#333;"></div>
<div class="t" style="top:502.00px;font:700 10.67px/1 'Liberation Sans', Arial, sans-serif;color:#0a0a0a;left:737.00px;transform-origin:0 0;letter-spacing:0.094px;">Produto</div>
<div class="t" style="top:502.00px;font:700 10.67px/1 'Liberation Sans', Arial, sans-serif;color:#0a0a0a;left:1266.20px;transform-origin:0 0;letter-spacing:0.050px;">Referência</div>
<div class="t" style="top:503.00px;font:700 9.33px/1 'Liberation Sans', Arial, sans-serif;color:#0a0a0a;left:1360.50px;transform-origin:0 0;letter-spacing:0.105px;">Prazo Máximo</div>
<div class="t" style="top:502.00px;font:700 10.67px/1 'Liberation Sans', Arial, sans-serif;color:#0a0a0a;right:420.50px;transform-origin:100% 0;">Qtde.</div>
<div class="t" style="top:503.00px;font:700 9.33px/1 'Liberation Sans', Arial, sans-serif;color:#0a0a0a;left:1507.50px;transform-origin:0 0;letter-spacing:0.191px;">Und.</div>
<div class="t" style="top:502.00px;font:700 10.67px/1 'Liberation Sans', Arial, sans-serif;color:#0a0a0a;right:321.80px;transform-origin:100% 0;">Saldo</div>
<div class="t" style="top:502.00px;font:700 10.67px/1 'Liberation Sans', Arial, sans-serif;color:#0a0a0a;right:242.50px;transform-origin:100% 0;">Unitário</div>
<div class="t" style="top:503.00px;font:700 8.2px/1 'Liberation Sans', Arial, sans-serif;color:#0a0a0a;left:1680.50px;transform-origin:0 0;letter-spacing:-0.005px;">% ICMS</div>
<div class="t" style="top:503.00px;font:700 8.2px/1 'Liberation Sans', Arial, sans-serif;color:#0a0a0a;left:1719.00px;transform-origin:0 0;letter-spacing:-0.016px;">% IPI</div>
<div class="t" style="top:502.00px;font:700 10.67px/1 'Liberation Sans', Arial, sans-serif;color:#0a0a0a;right:107.50px;transform-origin:100% 0;">Total</div>
<div class="b" style="left:732.5px;top:517.5px;width:1078.5px;height:119.7px;border:1px solid #e2e2e2;border-top:none;"></div>
<div class="t" style="top:522.00px;font:400 9.5px/1 'Liberation Mono', 'Courier New', monospace;color:#5e5e5e;left:737.00px;transform-origin:0 0;letter-spacing:0.689px;">CADEIRA GABRIELA TAPEÇADA[DIMENSÃO: L 0.510 P 0.570 H 0.820] [ACABAMENTO:</div>
<div class="t" style="top:540.00px;font:400 9.5px/1 'Liberation Mono', 'Courier New', monospace;color:#5e5e5e;left:737.00px;transform-origin:0 0;letter-spacing:0.689px;">MEL CLARO] [CATEGORIA DE TECIDO: COURO] [ESTRUTURA: MADEIRA] &nbsp;[REF.:</div>
<div class="t" style="top:557.00px;font:400 9.5px/1 'Liberation Mono', 'Courier New', monospace;color:#5e5e5e;left:737.00px;transform-origin:0 0;letter-spacing:0.679px;">TINGIMENTO MEL CLARO]</div>
<div class="t" style="top:574.00px;font:italic 700 9.5px/1 'Liberation Mono', 'Courier New', monospace;color:#0a0a0a;left:737.00px;transform-origin:0 0;letter-spacing:0.726px;">COMPROMETIMENTO &nbsp; &nbsp;3005980 - 01: ALTERAÇÃO DO PRAZO DE ENTREGA PADRÃO</div>
<div class="t" style="top:590.00px;font:italic 700 9.5px/1 'Liberation Mono', 'Courier New', monospace;color:#0a0a0a;left:737.00px;transform-origin:0 0;letter-spacing:0.707px;">ALTERAÇÃO NO PRAZO DE ENTREGA PADRÃO -</div>
<div class="t" style="top:606.00px;font:italic 700 9.5px/1 'Liberation Mono', 'Courier New', monospace;color:#0a0a0a;left:737.00px;transform-origin:0 0;letter-spacing:0.714px;">OBSERVAÇÃO: TINGIMENTO MEL CLARO &nbsp; &nbsp;COURO FENDI</div>
<div class="t" style="top:623.00px;font:italic 700 9.5px/1 'Liberation Mono', 'Courier New', monospace;color:#0a0a0a;left:737.00px;transform-origin:0 0;letter-spacing:0.726px;">REFERÊNCIA DE REVESTIMENTO: TINGIMENTO MEL CLARO</div>
<div class="t" style="top:523.00px;font:400 9.33px/1 'Liberation Sans', Arial, sans-serif;color:#222;left:1360.50px;transform-origin:0 0;letter-spacing:0.131px;">20/02/2025</div>
<div class="t" style="top:522.00px;font:400 10.67px/1 'Liberation Sans', Arial, sans-serif;color:#222;right:417.50px;transform-origin:100% 0;">8,0000</div>
<div class="t" style="top:522.00px;font:400 10px/1 'Liberation Sans', Arial, sans-serif;color:#222;left:1512.00px;transform-origin:0 0;letter-spacing:0.047px;">PC</div>
<div class="t" style="top:522.00px;font:400 10.67px/1 'Liberation Sans', Arial, sans-serif;color:#222;right:315.50px;transform-origin:100% 0;">0,0000</div>
<div class="t" style="top:521.00px;font:400 10.67px/1 'Liberation Sans', Arial, sans-serif;color:#222;right:241.50px;transform-origin:100% 0;">1631,00</div>
<div class="t" style="top:523.00px;font:400 9.33px/1 'Liberation Sans', Arial, sans-serif;color:#222;left:1682.50px;transform-origin:0 0;letter-spacing:0.071px;">18,00</div>
<div class="t" style="top:523.00px;font:400 9.33px/1 'Liberation Sans', Arial, sans-serif;color:#222;left:1719.50px;transform-origin:0 0;letter-spacing:0.211px;">3,25</div>
<div class="t" style="top:521.00px;font:400 10.67px/1 'Liberation Sans', Arial, sans-serif;color:#222;right:107.50px;transform-origin:100% 0;">13048,00</div>
<div class="t" style="top:645.00px;font:700 10.67px/1 'Liberation Sans', Arial, sans-serif;color:#0a0a0a;left:1058.50px;transform-origin:0 0;letter-spacing:0.104px;">TOTAL QUANTIDADE</div>
<div class="t" style="top:645.00px;font:700 10.67px/1 'Liberation Sans', Arial, sans-serif;color:#0a0a0a;left:1210.20px;transform-origin:0 0;letter-spacing:0.118px;">8,0000</div>
<div class="t" style="top:645.00px;font:700 10.67px/1 'Liberation Sans', Arial, sans-serif;color:#0a0a0a;left:1519.00px;transform-origin:0 0;letter-spacing:0.036px;">IPI/ISS: R$ 424,06</div>
<div class="t" style="top:645.00px;font:700 10.67px/1 'Liberation Sans', Arial, sans-serif;color:#0a0a0a;left:1625.50px;transform-origin:0 0;letter-spacing:0.060px;">TOTAL MERCADORIA: R$ 13.048,00</div>
<div class="b" style="left:730.5px;top:662.3px;width:1077.5px;height:1.5px;background:#e1e1e1;"></div>
<div class="t" style="top:670.00px;font:700 12px/1 'Liberation Sans', Arial, sans-serif;color:#0a0a0a;left:1544.00px;transform-origin:0 0;letter-spacing:0.041px;">TOTAL DA ORDEM DE COMPRA: R$ 13.472,06</div>
<div class="b" style="left:730.5px;top:686px;width:1077.5px;height:1.5px;background:#e1e1e1;"></div>
<div class="b" style="left:734px;top:684.5px;width:289px;height:24px;border:2px solid #f49595;"></div>
<div class="t" style="top:694.00px;font:700 10.67px/1 'Liberation Sans', Arial, sans-serif;color:#0a0a0a;left:738.00px;transform-origin:0 0;letter-spacing:0.065px;">CONDIÇÃO DE PAGAMENTO:</div>
<div class="t" style="top:694.00px;font:400 10.67px/1 'Liberation Sans', Arial, sans-serif;color:#222;left:895.20px;transform-origin:0 0;letter-spacing:0.043px;">28 / 56 / 84 DDL</div>
<div class="t" style="top:694.00px;font:700 10.67px/1 'Liberation Sans', Arial, sans-serif;color:#0a0a0a;left:1112.50px;transform-origin:0 0;letter-spacing:0.037px;">USUÁRIO:</div>
<div class="t" style="top:694.00px;font:400 10.67px/1 'Liberation Sans', Arial, sans-serif;color:#222;left:1171.20px;transform-origin:0 0;letter-spacing:0.091px;">SONIA REGINA SOUZA YOSHIDA</div>
<div class="t" style="top:694.00px;font:700 10.67px/1 'Liberation Sans', Arial, sans-serif;color:#0a0a0a;left:1366.20px;transform-origin:0 0;letter-spacing:0.044px;">FRETE POR CONTA:</div>
<div class="t" style="top:694.00px;font:400 10.67px/1 'Liberation Sans', Arial, sans-serif;color:#222;left:1477.00px;transform-origin:0 0;letter-spacing:0.128px;">DESTINATÁRIO</div>
<div class="t" style="top:694.00px;font:700 10.67px/1 'Liberation Sans', Arial, sans-serif;color:#0a0a0a;left:1627.00px;transform-origin:0 0;letter-spacing:0.067px;">PRAZO MÁXIMO:</div>
<div class="t" style="top:694.00px;font:400 10.67px/1 'Liberation Sans', Arial, sans-serif;color:#000;left:1755.00px;transform-origin:0 0;letter-spacing:0.016px;">20/02/2025</div>
<div class="t" style="top:713.00px;font:700 10.67px/1 'Liberation Sans', Arial, sans-serif;color:#0a0a0a;left:738.00px;transform-origin:0 0;letter-spacing:0.032px;">VENDA DE MERCADORIAS (PV):3005980</div>
<div class="t" style="top:713.00px;font:700 10.67px/1 'Liberation Sans', Arial, sans-serif;color:#0a0a0a;left:958.20px;transform-origin:0 0;">VENDEDOR(ES): DIOGO RAMOS DE OLIVEIRA</div>
<div class="t" style="top:713.00px;font:700 10.67px/1 'Liberation Sans', Arial, sans-serif;color:#0a0a0a;left:1207.50px;transform-origin:0 0;letter-spacing:0.025px;">LOJA: LOEIL GABRIEL</div>
<div class="t" style="top:713.00px;font:700 10.67px/1 'Liberation Sans', Arial, sans-serif;color:#0a0a0a;left:1337.00px;transform-origin:0 0;letter-spacing:0.011px;">GRUPO FINANCEIRO: COMPRA DE MERCADO</div>
<div class="b" style="left:730.5px;top:727px;width:1077.5px;height:1.5px;background:#e1e1e1;"></div>
<div class="t" style="top:732.00px;font:700 10.67px/1 'Liberation Sans', Arial, sans-serif;color:#0a0a0a;left:735.00px;transform-origin:0 0;letter-spacing:0.055px;">NOTAS FISCAIS RECEBIDAS</div>
<div class="t" style="top:747.00px;font:700 10.67px/1 'Liberation Sans', Arial, sans-serif;color:#0a0a0a;left:751.50px;transform-origin:0 0;letter-spacing:0.122px;">Número</div>
<div class="t" style="top:747.00px;font:700 10.67px/1 'Liberation Sans', Arial, sans-serif;color:#0a0a0a;left:845.20px;transform-origin:0 0;letter-spacing:0.086px;">Data Movto</div>
<div class="t" style="top:747.00px;font:700 10.67px/1 'Liberation Sans', Arial, sans-serif;color:#0a0a0a;left:936.70px;transform-origin:0 0;letter-spacing:0.065px;">Produto</div>
<div class="t" style="top:747.00px;font:700 10.67px/1 'Liberation Sans', Arial, sans-serif;color:#0a0a0a;left:1056.50px;transform-origin:0 0;letter-spacing:0.193px;">Qtde.</div>
<div class="t" style="top:747.00px;font:700 10.67px/1 'Liberation Sans', Arial, sans-serif;color:#0a0a0a;left:1118.20px;transform-origin:0 0;letter-spacing:0.089px;">Número</div>
<div class="t" style="top:747.00px;font:700 10.67px/1 'Liberation Sans', Arial, sans-serif;color:#0a0a0a;left:1212.20px;transform-origin:0 0;letter-spacing:0.056px;">Data Movto</div>
<div class="t" style="top:747.00px;font:700 10.67px/1 'Liberation Sans', Arial, sans-serif;color:#0a0a0a;left:1301.20px;transform-origin:0 0;letter-spacing:0.065px;">Produto</div>
<div class="t" style="top:747.00px;font:700 10.67px/1 'Liberation Sans', Arial, sans-serif;color:#0a0a0a;left:1424.00px;transform-origin:0 0;letter-spacing:0.193px;">Qtde.</div>
<div class="b" style="left:751.2px;top:758.2px;width:714.5px;height:1.2px;background:#333;"></div>
<div class="b" style="left:1100.7px;top:744.2px;width:1.2px;height:33.3px;background:#222;"></div>
<div class="t" style="top:763.00px;font:400 10.67px/1 'Liberation Sans', Arial, sans-serif;color:#222;left:752.00px;transform-origin:0 0;letter-spacing:0.070px;">1811</div>
<div class="t" style="top:763.00px;font:400 10.67px/1 'Liberation Sans', Arial, sans-serif;color:#222;left:845.20px;transform-origin:0 0;letter-spacing:0.102px;">08/01/25</div>
<div class="t" style="top:763.00px;font:400 10.67px/1 'Liberation Sans', Arial, sans-serif;color:#222;left:937.00px;transform-origin:0 0;letter-spacing:0.059px;">100100010711032</div>
<div class="t" style="top:764.00px;font:400 10.67px/1 'Liberation Sans', Arial, sans-serif;color:#222;left:1053.70px;transform-origin:0 0;letter-spacing:0.151px;">8,0000</div>
<div class="t" style="top:787.00px;font:700 10.67px/1 'Liberation Sans', Arial, sans-serif;color:#0a0a0a;left:1242.70px;transform-origin:0 0;letter-spacing:0.228px;">ATENÇÃO</div>
<div class="t" style="top:801.00px;font:700 10.67px/1 'Liberation Sans', Arial, sans-serif;color:#0a0a0a;left:937.70px;transform-origin:0 0;letter-spacing:0.012px;">1. Reservamos-nos o direito de devolver as mercadorias com defeito ou que não obedeçam as condições deste pedido;</div>
<div class="t" style="top:816.00px;font:700 10.67px/1 'Liberation Sans', Arial, sans-serif;color:#0a0a0a;left:937.70px;transform-origin:0 0;letter-spacing:0.013px;">2. Favor programar a entrega com 24 horas de antecedência;</div>
<div class="t" style="top:829.00px;font:700 10.67px/1 'Liberation Sans', Arial, sans-serif;color:#0a0a0a;left:937.70px;transform-origin:0 0;letter-spacing:0.018px;">3. Favor confirmar o recebimento desta ordem de compra;</div>
<div class="t" style="top:843.00px;font:700 10.67px/1 'Liberation Sans', Arial, sans-serif;color:#0a0a0a;left:937.70px;transform-origin:0 0;letter-spacing:0.017px;">4. Favor confirmar o recebimento do comprometimento.</div>
<div class="b" style="left:735px;top:947.7px;width:1080px;height:1.2px;background:#9a9a9a;"></div>
<div class="t" style="top:954.00px;font:400 10.37px/1 'Liberation Sans', Arial, sans-serif;color:#222;left:738.00px;transform-origin:0 0;letter-spacing:0.148px;">Send Informática Ltda.</div>
<div class="t" style="top:954.00px;font:400 10.37px/1 'Liberation Sans', Arial, sans-serif;color:#222;left:1218.70px;transform-origin:0 0;letter-spacing:0.228px;">www.sendinfo.com.br</div>
<div class="t" style="top:954.00px;font:400 10.37px/1 'Liberation Sans', Arial, sans-serif;color:#222;left:1699.50px;transform-origin:0 0;transform:scaleX(1.0586);">Página:</div>
<div class="t" style="top:954.00px;font:400 10.37px/1 'Liberation Sans', Arial, sans-serif;color:#222;left:1764.50px;transform-origin:0 0;letter-spacing:0.406px;">1/ &nbsp;1</div>
<svg style="left:0;top:0" width="1916" height="1060" viewBox="0 0 1916 1060">
<defs><filter id="sh" x="-10%" y="-10%" width="125%" height="125%"><feGaussianBlur in="SourceAlpha" stdDeviation="1.700"/><feOffset dx="2.600" dy="3"/><feComponentTransfer><feFuncA type="linear" slope=".62"/></feComponentTransfer><feMerge><feMergeNode/><feMergeNode in="SourceGraphic"/></feMerge></filter></defs>
<g filter="url(#sh)">
<path d="M542 492 L780.700 306.700 L776.400 303.200 L801 297 L787.700 320.200 L786.100 313.900 Z" fill="#04407f" stroke="#fff" stroke-width="1.300" stroke-linejoin="miter" paint-order="stroke"/>
<path d="M8.600 574.300 L34 574.300 L30.800 568.400 L47.200 575.500 L30.900 582.700 L34 576.800 L8.600 576.800 A1.250 1.250 0 0 1 8.600 574.300 Z" fill="#04407f"/>
</g></svg>
<div class="b" style="left:0px;top:0px;width:1916px;height:1px;background:#c0c0c0;z-index:50;"></div>
<div class="b" style="left:0px;top:1px;width:1916px;height:1px;background:#cfcac5;z-index:50;"></div>
<div class="b" style="left:0px;top:0px;width:1px;height:1060px;background:#c0c0c0;z-index:50;"></div>
<div class="b" style="left:1px;top:1px;width:1px;height:1058px;background:#cfcac5;z-index:50;"></div>
<div class="b" style="left:1914px;top:0px;width:2px;height:1060px;background:#c0c0c0;z-index:50;"></div>
<div class="b" style="left:0px;top:1058px;width:1916px;height:2px;background:#c0c0c0;z-index:50;"></div>
</body></html>
